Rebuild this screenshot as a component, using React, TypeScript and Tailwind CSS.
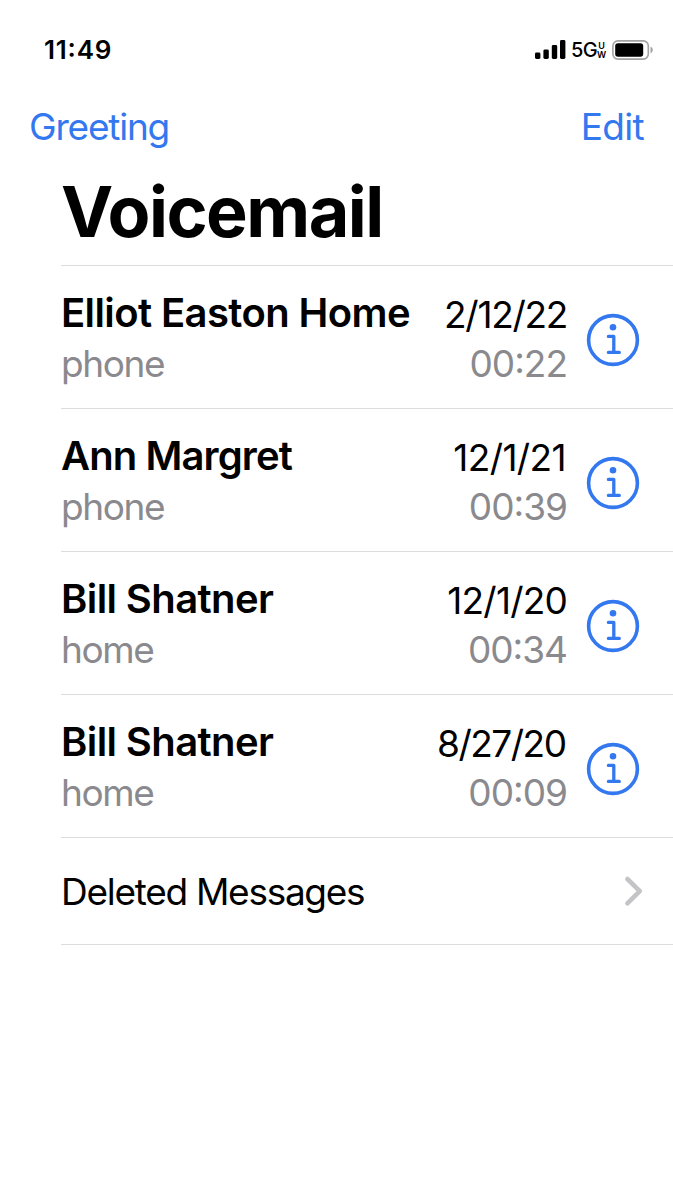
import clsx from 'clsx';

interface Message {
  name: string;
  label: string;
  date: string;
  duration: string;
  nameClass: string;
  dateClass: string;
}

const messages: Message[] = [
  { name: 'Elliot Easton Home', label: 'phone', date: '2/12/22', duration: '00:22', nameClass: 'tracking-[-0.6px]', dateClass: 'tracking-[-1.3px]' },
  { name: 'Ann Margret', label: 'phone', date: '12/1/21', duration: '00:39', nameClass: 'tracking-[-0.9px]', dateClass: 'tracking-[-0.6px] mr-px' },
  { name: 'Bill Shatner', label: 'home', date: '12/1/20', duration: '00:34', nameClass: 'tracking-[-0.6px]', dateClass: 'tracking-[-0.8px]' },
  { name: 'Bill Shatner', label: 'home', date: '8/27/20', duration: '00:09', nameClass: 'tracking-[-0.6px]', dateClass: 'tracking-[-1.5px] mr-[1.5px]' },
];

function SignalIcon() {
  return (
    <svg width="31" height="20" viewBox="0 0 31 20" fill="#000">
      <rect x="0" y="12.6" width="5.4" height="6.4" rx="1.4" />
      <rect x="8.4" y="9.6" width="5.4" height="9.4" rx="1.4" />
      <rect x="16.8" y="5" width="5.4" height="14" rx="1.4" />
      <rect x="25" y="0" width="5.4" height="19" rx="1.4" />
    </svg>
  );
}

function BatteryIcon() {
  return (
    <svg width="42" height="20" viewBox="0 0 42 20" fill="none">
      <rect x="0.9" y="0.9" width="35.4" height="18.2" rx="5" stroke="#a3a3a3" strokeWidth="1.6" />
      <rect x="3.2" y="3.2" width="28" height="13.6" rx="2.8" fill="#000" />
      <path d="M38.5 6.8c3 1 3 5.4 0 6.4z" fill="#a3a3a3" />
    </svg>
  );
}

function InfoIcon() {
  return (
    <svg width="54" height="54" viewBox="0 0 54 54" fill="none" stroke="#3478f0" strokeLinecap="round" strokeLinejoin="round">
      <circle cx="27" cy="27" r="24.4" strokeWidth="3.6" />
      <circle cx="27" cy="14.2" r="3.3" fill="#3478f0" stroke="none" />
      <path d="M22.4 23.4h5.4v16M22.4 39.4h10.9" strokeWidth="3.3" />
    </svg>
  );
}

function MessageRow({ message }: { message: Message }) {
  return (
    <li className="flex h-[143px] border-b border-[#dcdcde]">
      <div className="flex-1 pt-[22px] whitespace-nowrap">
        <div className={clsx('text-[40px] leading-[50px] font-semibold', message.nameClass)}>{message.name}</div>
        <div className="text-[37px] leading-[51px] text-[#8a8a8e] tracking-[-1.4px]">{message.label}</div>
      </div>
      <div className="pt-[24px] text-right text-[37px] whitespace-nowrap">
        <div className={clsx('leading-[50px]', message.dateClass)}>{message.date}</div>
        <div className="leading-[48px] text-[#8a8a8e] tracking-[-1px] [font-feature-settings:'case']">{message.duration}</div>
      </div>
      <button className="ml-[19px] mr-[33px] mt-[47px] h-[54px] w-[54px]" aria-label="Details">
        <InfoIcon />
      </button>
    </li>
  );
}

export default function App() {
  return (
    <div className="h-[1200px] w-[673px] overflow-hidden bg-white font-['Inter',sans-serif] text-black">
      <div className="flex h-[100px] items-center justify-between pl-[44px] pr-[19px]">
        <span className="text-[26px] leading-none font-semibold tracking-[0.8px] [font-feature-settings:'case']">11:49</span>
        <div className="flex items-center">
          <SignalIcon />
          <span className="ml-[5px] text-[20px] leading-none font-medium tracking-[-0.6px]">5G</span>
          <span className="mr-[6px] flex w-[9px] flex-col items-center text-[9px] leading-[9px] font-semibold">
            <span>U</span>
            <span>W</span>
          </span>
          <BatteryIcon />
        </div>
      </div>

      <nav className="flex h-[54px] items-center justify-between pl-[29px] pr-[29px] text-[37px] text-[#3478f0]">
        <button className="tracking-[-1.2px]">Greeting</button>
        <button className="tracking-[-0.7px]">Edit</button>
      </nav>

      <main className="ml-[61px]">
        <h1 className="h-[112px] border-b border-[#dcdcde] pt-[22px] text-[70px] leading-[72px] font-bold tracking-[-1.5px]">
          Voicemail
        </h1>
        <ul>
          {messages.map((message, i) => (
            <MessageRow key={i} message={message} />
          ))}
        </ul>
        <div className="flex h-[107px] items-center justify-between border-b border-[#dcdcde] pr-[29px]">
          <span className="pt-px text-[37px] tracking-[-1.28px]">Deleted Messages</span>
          <svg width="20" height="32" viewBox="0 0 20 32" fill="none" stroke="#c4c4c6" strokeWidth="4.6" strokeLinecap="round" strokeLinejoin="round">
            <path d="M3.4 4 15.8 16.2 3.4 28.4" />
          </svg>
        </div>
      </main>
    </div>
  );
}
